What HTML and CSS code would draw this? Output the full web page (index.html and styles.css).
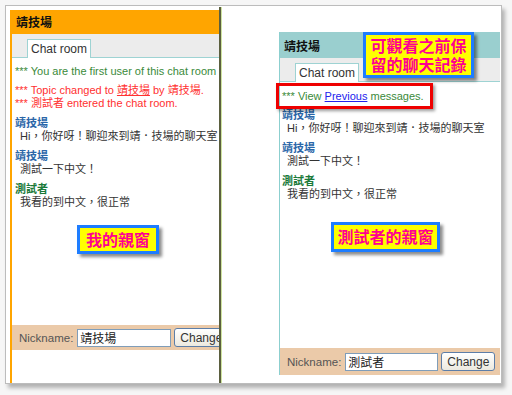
FILE: index.html
```html
<!DOCTYPE html>
<html lang="zh-Hant">

<head>
    <meta charset="UTF-8">
    <title>聊天室</title>
    <link rel="stylesheet" href="styles.css">
</head>

<body>
    <div class="frame">
        <div class="shot shot-left">
            <div class="head">靖技場</div>
            <div class="tabs"><span class="tab">Chat room</span></div>
            <div class="log">
                <p class="sys green">*** You are the first user of this chat room</p>
                <div class="sys-group">
                    <p class="sys red">*** Topic changed to <u>靖技場</u> by 靖技場.</p>
                    <p class="sys red">*** 測試者 entered the chat room.</p>
                </div>
                <div class="msg">
                    <p class="who blue">靖技場</p>
                    <p class="say">Hi，你好呀！聊迎來到靖．技場的聊天室</p>
                </div>
                <div class="msg">
                    <p class="who blue">靖技場</p>
                    <p class="say">測試一下中文！</p>
                </div>
                <div class="msg">
                    <p class="who green">測試者</p>
                    <p class="say">我看的到中文，很正常</p>
                </div>
            </div>
            <div class="nick">
                <span class="label">Nickname:</span>
                <input class="field" type="text" value="靖技場">
                <button class="btn">Change</button>
            </div>
            <div class="tail"></div>
        </div>

        <div class="divider"></div>

        <div class="side-right">
            <div class="shot shot-right">
                <div class="head">靖技場</div>
                <div class="tabs"><span class="tab">Chat room</span></div>
                <div class="log">
                    <p class="sys green">*** View <a href="#">Previous</a> messages.</p>
                    <div class="msg">
                        <p class="who blue">靖技場</p>
                        <p class="say">Hi，你好呀！聊迎來到靖．技場的聊天室</p>
                    </div>
                    <div class="msg">
                        <p class="who blue">靖技場</p>
                        <p class="say">測試一下中文！</p>
                    </div>
                    <div class="msg">
                        <p class="who green">測試者</p>
                        <p class="say">我看的到中文，很正常</p>
                    </div>
                </div>
                <div class="nick">
                    <span class="label">Nickname:</span>
                    <input class="field" type="text" value="測試者">
                    <button class="btn">Change</button>
                </div>
            </div>
        </div>

        <!-- annotations drawn over the screenshots -->
        <div class="note note-mine">我的親窗</div>
        <div class="note note-tester">測試者的親窗</div>
        <div class="note note-history">可觀看之前保<br>留的聊天記錄</div>
        <div class="mark"></div>
    </div>
</body>

</html>
```

FILE: styles.css
```css
* {
    margin: 0;
    padding: 0;
    box-sizing: border-box;
}

body {
    background-color: #f6f6f6;
    font-family: "Liberation Sans", "Noto Sans CJK TC", sans-serif;
    width: 512px;
    height: 395px;
    overflow: hidden;
}

.frame {
    position: relative;
    display: flex;
    width: 497px;
    height: 379px;
    margin: 5px 0 0 5px;
    background-color: white;
    border: 1px solid #bcbcbc;
    box-shadow: 3px 4px 4px rgba(0, 0, 0, 0.28);
}

.shot {
    display: flex;
    flex-direction: column;
    overflow: hidden;
}

.shot-left {
    width: 209px;
    height: 373px;
    margin: 4px 0 0 4px;
    border-left: 2px solid #ffa500;
}

.head {
    flex: none;
    font-family: "Noto Sans CJK TC", sans-serif;
    font-weight: bold;
    font-size: 12px;
    color: #111;
}

.shot-left .head {
    height: 24px;
    line-height: 24px;
    padding-left: 4px;
    background-color: #ffa500;
}

.tabs {
    flex: none;
    display: flex;
    align-items: flex-end;
    height: 24px;
    padding-left: 15px;
    background-color: #ececec;
    border-bottom: 1px solid #9ed3d3;
}

.tab {
    height: 19px;
    margin-bottom: -1px;
    padding: 0 3px;
    line-height: 18px;
    font-size: 12px;
    color: #333;
    background-color: white;
    border: 1px solid #9ed3d3;
    border-bottom: 0;
    white-space: nowrap;
}

.log {
    flex: 1;
    padding: 7px 0 0 3px;
    font-size: 11px;
    white-space: nowrap;
}

.sys {
    line-height: 13px;
}

.sys-group {
    margin-top: 6px;
}

.green {
    color: #3a8a3a;
}

.red {
    color: #ff3030;
}

.blue {
    color: #2a66a8;
}

.msg {
    margin-top: 5px;
}

.who {
    line-height: 14px;
    font-weight: bold;
    font-family: "Noto Sans CJK TC", sans-serif;
}

.who.green {
    color: #1a7a3a;
}

.say {
    line-height: 14px;
    margin-left: 5px;
    color: #333;
}

.nick {
    flex: none;
    display: flex;
    align-items: center;
    height: 25px;
    padding-left: 7px;
    background-color: #ebcaa9;
}

.label {
    font-size: 11.5px;
    color: #555;
    margin-right: 4px;
}

.field {
    flex: none;
    width: 94px;
    height: 18px;
    padding: 0 2px;
    font-family: "Noto Sans CJK TC", sans-serif;
    font-size: 12px;
    color: #222;
    border: 1px solid #7f9db9;
    background-color: white;
}

.btn {
    flex: none;
    width: 54px;
    height: 19px;
    margin-left: 3px;
    font-family: "Liberation Sans", sans-serif;
    font-size: 12px;
    color: #333;
    border: 1px solid #5d7ea8;
    border-radius: 3px;
    background-image: linear-gradient(white, #ece9df);
}

.tail {
    flex: none;
    height: 33px;
}

.divider {
    flex: none;
    width: 3px;
    height: 376px;
    margin-top: 1px;
    background-color: #5b5f3f;
    border-right: 1px solid #cfe3a0;
}

.side-right {
    flex: none;
    width: 279px;
    padding: 26px 0 0 57px;
}

.shot-right {
    width: 221px;
    height: 343px;
    border-left: 1px solid #8ccfcf;
}

.shot-right .head {
    height: 26px;
    line-height: 28px;
    padding-left: 4px;
    background-color: #9acfcf;
}

.shot-right .tabs {
    height: 24px;
}

.shot-right .log {
    padding: 8px 0 0 2px;
}

.shot-right .msg:first-of-type {
    margin-top: 4px;
}

.shot-right .log a {
    color: #2222ee;
}

.shot-right .nick {
    height: 27px;
}

.shot-right .field {
    width: 93px;
}

.note {
    position: absolute;
    text-align: center;
    font-family: "Noto Sans CJK TC", sans-serif;
    font-weight: bold;
    font-size: 16px;
    color: #ff0090;
    background-color: #ffff00;
    border: 3px solid #1e7dff;
    box-shadow: 3px 3px 3px rgba(0, 0, 0, 0.45);
}

.note-mine {
    left: 71px;
    top: 219px;
    width: 82px;
    height: 29px;
    line-height: 22px;
}

.note-tester {
    left: 325px;
    top: 216px;
    width: 109px;
    height: 30px;
    line-height: 23px;
}

.note-history {
    left: 357px;
    top: 26px;
    width: 111px;
    height: 46px;
    line-height: 19px;
    padding-top: 1px;
}

.mark {
    position: absolute;
    left: 270px;
    top: 77px;
    width: 157px;
    height: 26px;
    border: 3px solid #ee0000;
    box-shadow: 2px 2px 3px rgba(0, 0, 0, 0.4);
}
```
